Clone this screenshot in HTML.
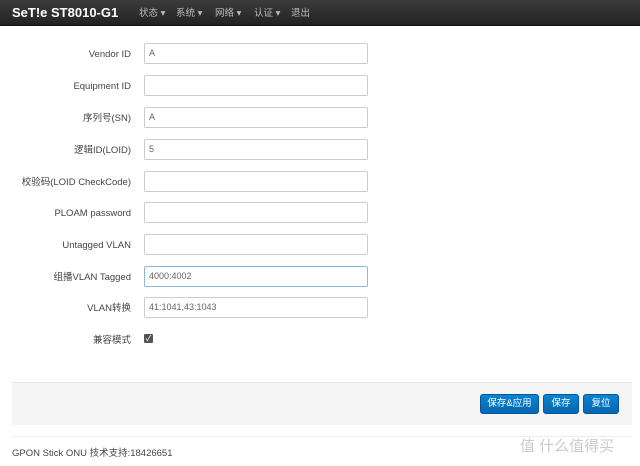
<!DOCTYPE html>
<html><head><meta charset="utf-8"><style>
*{box-sizing:border-box;margin:0;padding:0}
body{width:640px;height:466px;background:#fff;font-family:"Liberation Sans","Noto Sans CJK SC",sans-serif;position:relative;overflow:hidden;color:#333}
.nav{position:absolute;left:0;top:0;width:640px;height:26px;background:linear-gradient(#3c3c3c,#222);border-bottom:1px solid #111}
.brand{position:absolute;left:12px;top:5px;font-size:13px;line-height:16px;color:#fff;font-weight:bold}
.mi{position:absolute;top:8px;font-size:9.5px;line-height:12px;color:#bbb}
.lbl{position:absolute;right:509px;font-size:9.5px;line-height:12px;height:12px;color:#444;text-align:right;white-space:nowrap;margin-top:2px}
.in{position:absolute;left:144px;width:224px;height:21px;border:1px solid #ccc;border-radius:2px;font-size:9px;line-height:11px;color:#666;padding:4px 4px;background:#fff}
.cb{position:absolute;left:144px;top:334px;width:9px;height:9px;background:#555;border-radius:1px;color:#fff;font-size:8px;line-height:9px;text-align:center}
.panel{position:absolute;left:12px;top:382px;width:620px;height:43px;background:#f5f5f5;border-top:1px solid #e5e5e5}
.btn{position:absolute;top:394px;height:20px;background:linear-gradient(#0a85d1,#0566b0);border:1px solid #04599c;border-radius:3px;color:#fff;font-size:9.5px;text-align:center;line-height:18px}
.foot{position:absolute;left:12px;top:448px;font-size:9.5px;line-height:12px;color:#444}
.wm{position:absolute;left:520px;top:438px;font-size:15px;line-height:18px;color:#ccc}
</style></head><body>
<div class="nav"><div class="brand">SeT!e ST8010-G1</div>
<div class="mi" style="left:139px">状态 ▾</div><div class="mi" style="left:176px">系统 ▾</div><div class="mi" style="left:215px">网络 ▾</div><div class="mi" style="left:254px">认证 ▾</div><div class="mi" style="left:291px">退出</div></div>
<div class="lbl" style="top:47px">Vendor ID</div><div class="in" style="top:43px">A</div>
<div class="lbl" style="top:79px">Equipment ID</div><div class="in" style="top:75px"></div>
<div class="lbl" style="top:111px">序列号(SN)</div><div class="in" style="top:107px">A</div>
<div class="lbl" style="top:143px">逻辑ID(LOID)</div><div class="in" style="top:139px">5</div>
<div class="lbl" style="top:175px">校验码(LOID CheckCode)</div><div class="in" style="top:171px"></div>
<div class="lbl" style="top:206px">PLOAM password</div><div class="in" style="top:202px"></div>
<div class="lbl" style="top:238px">Untagged VLAN</div><div class="in" style="top:234px"></div>
<div class="lbl" style="top:270px">组播VLAN Tagged</div><div class="in" style="top:266px;border-color:#8bb8dd">4000:4002</div>
<div class="lbl" style="top:301px">VLAN转换</div><div class="in" style="top:297px">41:1041,43:1043</div>
<div class="lbl" style="top:333px">兼容模式</div><div class="cb">✓</div>
<div class="panel"></div>
<div class="btn" style="left:480px;width:59px">保存&amp;应用</div>
<div class="btn" style="left:543px;width:36px">保存</div>
<div class="btn" style="left:583px;width:36px">复位</div>
<div style="position:absolute;left:12px;top:436px;width:620px;border-top:1px solid #eee"></div>
<div class="foot">GPON Stick ONU 技术支持:18426651</div>
<div class="wm">值 什么值得买</div>
</body></html>
